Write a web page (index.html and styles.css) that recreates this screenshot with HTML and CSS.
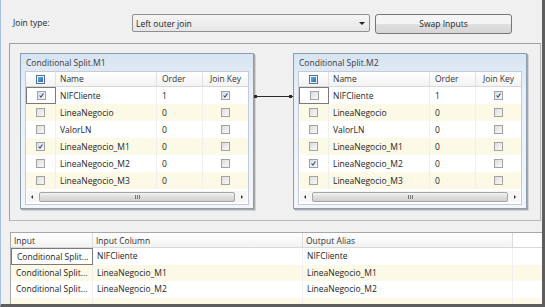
FILE: index.html
```html
<!DOCTYPE html>
<html lang="en">
<head>
  <meta charset="UTF-8">
  <title>Merge Join Transformation Editor</title>
  <link rel="stylesheet" href="styles.css">
</head>
<body>
  <div class="screen">
    <div class="join-row">
      <div class="join-label">Join type:</div>
      <div class="combo">
        <span>Left outer join</span>
        <span class="combo-arrow"></span>
      </div>
      <div class="btn">Swap Inputs</div>
    </div>

    <div class="design-area">
      <div class="panel">
        <div class="panel-title">Conditional Split.M1</div>
        <div class="grid">
          <div class="grid-head">
            <div class="cell center"><span class="cb cb-all"></span></div>
            <div class="cell">Name</div>
            <div class="cell">Order</div>
            <div class="cell center">Join Key</div>
          </div>
          <div class="grid-row">
            <div class="cell center focus"><span class="cb on"><svg viewBox="0 0 9 9"><path d="M2 4.5 L3.8 6.6 L7 2"/></svg></span></div>
            <div class="cell">NIFCliente</div>
            <div class="cell">1</div>
            <div class="cell center"><span class="cb on"><svg viewBox="0 0 9 9"><path d="M2 4.5 L3.8 6.6 L7 2"/></svg></span></div>
          </div>
          <div class="grid-row alt">
            <div class="cell center"><span class="cb"></span></div>
            <div class="cell">LineaNegocio</div>
            <div class="cell">0</div>
            <div class="cell center"><span class="cb"></span></div>
          </div>
          <div class="grid-row">
            <div class="cell center"><span class="cb"></span></div>
            <div class="cell">ValorLN</div>
            <div class="cell">0</div>
            <div class="cell center"><span class="cb"></span></div>
          </div>
          <div class="grid-row alt">
            <div class="cell center"><span class="cb on"><svg viewBox="0 0 9 9"><path d="M2 4.5 L3.8 6.6 L7 2"/></svg></span></div>
            <div class="cell">LineaNegocio_M1</div>
            <div class="cell">0</div>
            <div class="cell center"><span class="cb"></span></div>
          </div>
          <div class="grid-row">
            <div class="cell center"><span class="cb"></span></div>
            <div class="cell">LineaNegocio_M2</div>
            <div class="cell">0</div>
            <div class="cell center"><span class="cb"></span></div>
          </div>
          <div class="grid-row alt">
            <div class="cell center"><span class="cb"></span></div>
            <div class="cell">LineaNegocio_M3</div>
            <div class="cell">0</div>
            <div class="cell center"><span class="cb"></span></div>
          </div>
          <div class="hscroll">
            <div class="arrow left"></div>
            <div class="thumb"><span class="grip"></span></div>
            <div class="arrow right"></div>
          </div>
        </div>
      </div>

      <div class="link-line"></div>

      <div class="panel">
        <div class="panel-title">Conditional Split.M2</div>
        <div class="grid">
          <div class="grid-head">
            <div class="cell center"><span class="cb cb-all"></span></div>
            <div class="cell">Name</div>
            <div class="cell">Order</div>
            <div class="cell center">Join Key</div>
          </div>
          <div class="grid-row">
            <div class="cell center focus"><span class="cb"></span></div>
            <div class="cell">NIFCliente</div>
            <div class="cell">1</div>
            <div class="cell center"><span class="cb on"><svg viewBox="0 0 9 9"><path d="M2 4.5 L3.8 6.6 L7 2"/></svg></span></div>
          </div>
          <div class="grid-row alt">
            <div class="cell center"><span class="cb"></span></div>
            <div class="cell">LineaNegocio</div>
            <div class="cell">0</div>
            <div class="cell center"><span class="cb"></span></div>
          </div>
          <div class="grid-row">
            <div class="cell center"><span class="cb"></span></div>
            <div class="cell">ValorLN</div>
            <div class="cell">0</div>
            <div class="cell center"><span class="cb"></span></div>
          </div>
          <div class="grid-row alt">
            <div class="cell center"><span class="cb"></span></div>
            <div class="cell">LineaNegocio_M1</div>
            <div class="cell">0</div>
            <div class="cell center"><span class="cb"></span></div>
          </div>
          <div class="grid-row">
            <div class="cell center"><span class="cb on"><svg viewBox="0 0 9 9"><path d="M2 4.5 L3.8 6.6 L7 2"/></svg></span></div>
            <div class="cell">LineaNegocio_M2</div>
            <div class="cell">0</div>
            <div class="cell center"><span class="cb"></span></div>
          </div>
          <div class="grid-row alt">
            <div class="cell center"><span class="cb"></span></div>
            <div class="cell">LineaNegocio_M3</div>
            <div class="cell">0</div>
            <div class="cell center"><span class="cb"></span></div>
          </div>
          <div class="hscroll">
            <div class="arrow left"></div>
            <div class="thumb"><span class="grip"></span></div>
            <div class="arrow right"></div>
          </div>
        </div>
      </div>
    </div>

    <div class="output-grid">
      <div class="out-head">
        <div class="cell">Input</div>
        <div class="cell">Input Column</div>
        <div class="cell">Output Alias</div>
      </div>
      <div class="out-row">
        <div class="cell focus">Conditional Split...</div>
        <div class="cell">NIFCliente</div>
        <div class="cell">NIFCliente</div>
      </div>
      <div class="out-row alt">
        <div class="cell">Conditional Split...</div>
        <div class="cell">LineaNegocio_M1</div>
        <div class="cell">LineaNegocio_M1</div>
      </div>
      <div class="out-row">
        <div class="cell">Conditional Split...</div>
        <div class="cell">LineaNegocio_M2</div>
        <div class="cell">LineaNegocio_M2</div>
      </div>
      <div class="out-row alt">
        <div class="cell"></div>
        <div class="cell"></div>
        <div class="cell"></div>
      </div>
    </div>
  </div>
</body>
</html>
```

FILE: styles.css
```css
body {
  margin: 0;
  background-color: #f0f0f0;
  font-family: "Open Sans", "Noto Sans", sans-serif;
  font-size: 8.5px;
  color: #1e1e1e;
  overflow: hidden;
}
.screen {
  width: 545px;
  height: 307px;
  box-sizing: border-box;
  border-left: 1px solid #a9c2e0;
  border-right: 3px solid #5e5e5e;
  border-bottom: 3px solid #5e5e5e;
  overflow: hidden;
}
.join-row {
  display: flex;
  align-items: flex-start;
  padding: 14px 0 0 12px;
  height: 20px;
}
.join-label {
  width: 119px;
  line-height: 18px;
}
.combo {
  width: 238px;
  height: 18px;
  box-sizing: border-box;
  border: 1px solid #8f8f8f;
  border-radius: 2px;
  background: linear-gradient(#f5f5f5, #e6e6e6);
  display: flex;
  align-items: center;
  justify-content: space-between;
  padding: 0 4px 0 3px;
}
.combo-arrow {
  width: 0;
  height: 0;
  border-left: 3px solid transparent;
  border-right: 3px solid transparent;
  border-top: 3px solid #222;
}
.btn {
  margin-left: 5px;
  width: 137px;
  height: 20px;
  box-sizing: border-box;
  border: 1px solid #777;
  border-radius: 3px;
  background: linear-gradient(#f4f4f4 50%, #e0e0e0 50%, #d6d6d6);
  text-align: center;
  line-height: 18px;
}
.design-area {
  margin: 9px 0 0 8px;
  width: 532px;
  height: 178px;
  box-sizing: border-box;
  border: 1px solid #b9b9b9;
  border-top-color: #a0a0a0;
  border-left-color: #a0a0a0;
  display: flex;
  align-items: flex-start;
  padding: 9px 0 0 10px;
}
.panel {
  width: 234px;
  height: 156px;
  box-sizing: border-box;
  border: 1px solid #8d9db0;
  box-shadow: 1px 1px 0 #a8a8a8, 2px 2px 0 #d4d4d4;
  background: linear-gradient(#d7e4f2, #e9f0f8 25%, #f2f6fb);
  padding: 0 4px;
}
.panel-title {
  height: 17px;
  line-height: 18px;
  padding-left: 1px;
  color: #3a3a3a;
}
.link-line {
  width: 39px;
  height: 1px;
  margin-top: 43px;
  background-color: #2a2a2a;
  position: relative;
}
.link-line::before,
.link-line::after {
  content: "";
  position: absolute;
  top: -1px;
  width: 3px;
  height: 3px;
  background-color: #2a2a2a;
}
.link-line::before { left: 0; }
.link-line::after { right: 1px; }
.grid {
  height: 134px;
  box-sizing: border-box;
  border: 1px solid #c3ccd6;
  background-color: white;
}
.grid-head,
.grid-row {
  display: grid;
  grid-template-columns: 30px 101px 46px 1fr;
}
.grid-head {
  height: 15px;
  box-sizing: border-box;
  border-bottom: 1px solid #d8d8d8;
  background: linear-gradient(#ffffff, #f3f3f3);
  line-height: 14px;
  color: #333;
}
.grid-head .cell {
  border-right: 1px solid #e2e2e2;
}
.grid-row {
  height: 17px;
  line-height: 17px;
}
.grid-row .cell {
  border-right: 1px solid #f0f0f0;
}
.cell {
  padding-left: 4px;
  white-space: nowrap;
  overflow: hidden;
  box-sizing: border-box;
}
.grid-row .cell:nth-child(3),
.grid-head .cell:nth-child(3) {
  padding-left: 5px;
}
.cell.center {
  padding-left: 0;
  display: flex;
  align-items: center;
  justify-content: center;
}
.cell:last-child {
  border-right: none;
}
.alt {
  background-color: #fcf9e7;
}
.focus {
  border: 1px solid #7a7a7a !important;
}
.cb {
  width: 9px;
  height: 9px;
  box-sizing: border-box;
  border: 1px solid #a2a2a2;
  background: linear-gradient(135deg, #dedede, #f8f8f8);
  display: inline-block;
}
.cb svg {
  display: block;
  width: 7px;
  height: 7px;
}
.cb svg path {
  fill: none;
  stroke: #2b4aa3;
  stroke-width: 1.4;
}
.cb-all {
  border-color: #56708f;
  background: #f4f4f4;
  padding: 1px;
}
.cb-all::after {
  content: "";
  display: block;
  width: 5px;
  height: 5px;
  background: linear-gradient(135deg, #5fb2ee, #1f6fc0);
}
.hscroll {
  margin: 2px 1px 0;
  height: 11px;
  display: flex;
  align-items: center;
  background-color: #f6f6f6;
}
.arrow {
  width: 10px;
  height: 11px;
  display: flex;
  align-items: center;
  justify-content: center;
}
.arrow::after {
  content: "";
  border-top: 2px solid transparent;
  border-bottom: 2px solid transparent;
}
.arrow.left::after { border-right: 2px solid #333; }
.arrow.right::after { border-left: 2px solid #333; }
.thumb {
  flex: 1;
  height: 10px;
  margin: 0 2px;
  box-sizing: border-box;
  border: 1px solid #a5a5a5;
  border-radius: 2px;
  background: linear-gradient(#f3f3f3, #dedede 50%, #d0d0d0);
  display: flex;
  align-items: center;
  justify-content: center;
}
.grip {
  width: 5px;
  height: 4px;
  background: repeating-linear-gradient(90deg, #777 0 1px, transparent 1px 2px);
}
.output-grid {
  margin: 11px 0 0 9px;
  height: 80px;
  box-sizing: border-box;
  border: 1px solid #a8a8a8;
  border-right: none;
  border-bottom: none;
  background-color: white;
}
.out-head,
.out-row {
  display: grid;
  grid-template-columns: 82px 210px 210px;
}
.out-head {
  height: 15px;
  box-sizing: border-box;
  border-bottom: 1px solid #d8d8d8;
  line-height: 15px;
  color: #333;
}
.out-head .cell {
  background: linear-gradient(#ffffff, #f2f2f2);
  border-right: 1px solid #dcdcdc;
  padding-left: 3px;
}
.out-row {
  height: 16.5px;
  line-height: 16px;
}
.out-row .cell {
  border-right: 1px solid #f0f0f0;
}
.out-row .cell:first-child {
  padding-left: 5px;
}
```
